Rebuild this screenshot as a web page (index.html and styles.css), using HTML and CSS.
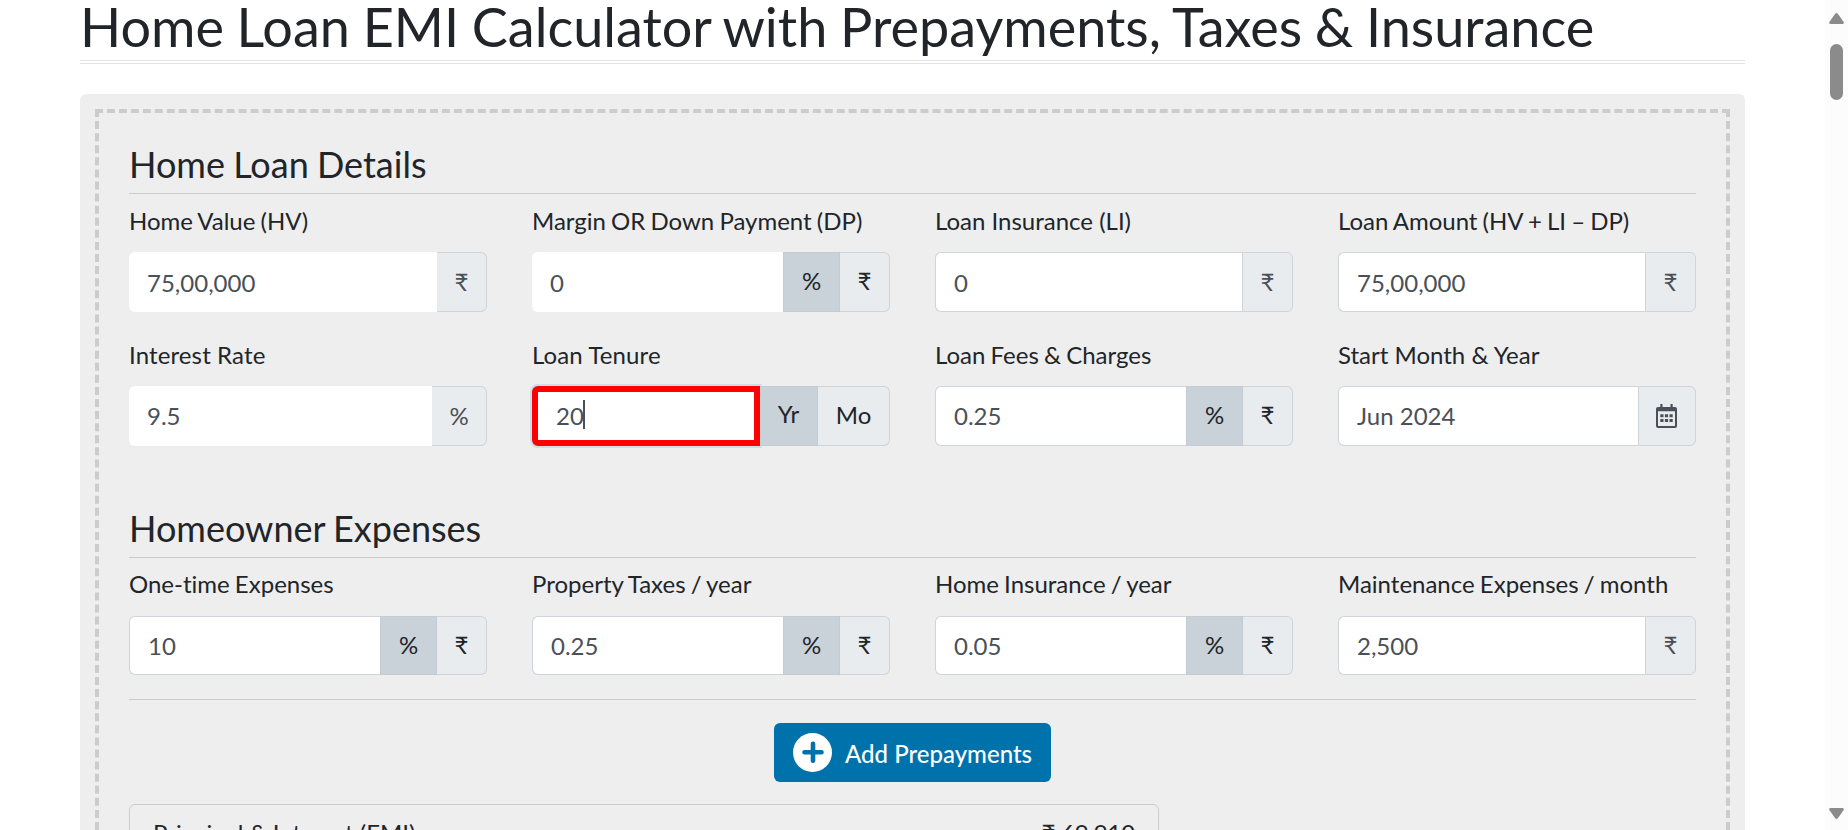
FILE: index.html
```html
<!DOCTYPE html>
<html lang="en">
<head>
<meta charset="utf-8">
<title>Home Loan EMI Calculator</title>
<link rel="stylesheet" href="styles.css">
</head>
<body>
<main class="page">
  <h1 class="title">Home Loan EMI Calculator with Prepayments, Taxes &amp; Insurance</h1>
  <div class="panel">
    <form class="form">
      <h2 class="heading">Home Loan Details</h2>
      <div class="row first">
        <div class="field"><label class="label">Home Value (HV)</label>
          <div class="group plain"><div class="input">75,00,000</div><span class="addon">₹</span></div></div>
        <div class="field"><label class="label">Margin OR Down Payment (DP)</label>
          <div class="group plain"><div class="input">0</div><span class="toggle active">%</span><span class="toggle">₹</span></div></div>
        <div class="field"><label class="label even">Loan Insurance (LI)</label>
          <div class="group"><div class="input">0</div><span class="addon">₹</span></div></div>
        <div class="field"><label class="label">Loan Amount (HV + LI – DP)</label>
          <div class="group"><div class="input">75,00,000</div><span class="addon">₹</span></div></div>
      </div>
      <div class="row">
        <div class="field"><label class="label even wide">Interest Rate</label>
          <div class="group plain"><div class="input">9.5</div><span class="addon percent">%</span></div></div>
        <div class="field"><label class="label even wide">Loan Tenure</label>
          <div class="group"><div class="input focus">20<span class="caret"></span></div><span class="toggle active yr">Yr</span><span class="toggle mo">Mo</span></div></div>
        <div class="field"><label class="label">Loan Fees &amp; Charges</label>
          <div class="group"><div class="input">0.25</div><span class="toggle active">%</span><span class="toggle">₹</span></div></div>
        <div class="field"><label class="label even">Start Month &amp; Year</label>
          <div class="group"><div class="input">Jun 2024</div><span class="addon date">
            <svg class="calendar" viewBox="0 0 21 24"><path fill-rule="evenodd" d="M4.300 0h2.200v3h8V0h2.200v3H19a2 2 0 0 1 2 2v17a2 2 0 0 1-2 2H2a2 2 0 0 1-2-2V5a2 2 0 0 1 2-2h2.300zM2 7.300v14.200q0 .5.5.5h16q.5 0 .5-.5V7.300z"/><path d="M4.300 10.200h3.200v3H4.300zM8.900 10.200h3.200v3H8.900zM13.500 10.200h3.200v3h-3.200zM4.300 15h3.200v3H4.300zM8.900 15h3.200v3H8.900zM13.500 15h3.200v3h-3.200z"/></svg></span></div></div>
      </div>
      <h2 class="heading second">Homeowner Expenses</h2>
      <div class="row short">
        <div class="field"><label class="label">One-time Expenses</label>
          <div class="group"><div class="input">10</div><span class="toggle active">%</span><span class="toggle">₹</span></div></div>
        <div class="field"><label class="label">Property Taxes / year</label>
          <div class="group"><div class="input">0.25</div><span class="toggle active">%</span><span class="toggle">₹</span></div></div>
        <div class="field"><label class="label">Home Insurance / year</label>
          <div class="group"><div class="input">0.05</div><span class="toggle active">%</span><span class="toggle">₹</span></div></div>
        <div class="field"><label class="label">Maintenance Expenses / month</label>
          <div class="group"><div class="input">2,500</div><span class="addon">₹</span></div></div>
      </div>
      <div class="actions">
        <button type="button" class="button"><svg class="plus" viewBox="0 0 39 39"><circle cx="19.500" cy="19.500" r="19.500" fill="#fff"/><path d="M20 10.700v17M11.500 19.200h17" stroke="#0072ab" stroke-width="4.600" stroke-linecap="round"/></svg><span>Add Prepayments</span></button>
      </div>
      <div class="summary"><span>Principal &amp; Interest (EMI)</span><span class="amount">₹ 69,910</span></div>
    </form>
  </div>
</main>
<div class="scrollbar">
  <svg class="arrow" viewBox="0 0 15 11"><path d="M6 1.100q1.500-2 3 0l5.500 7.700q1 2.200-1.200 2.200H1.700Q-.5 11 .5 8.800z"/></svg>
  <div class="thumb"></div>
  <svg class="arrow down" viewBox="0 0 15 11"><path d="M6 9.900q1.500 2 3 0l5.500-7.700Q15.500 0 13.300 0H1.700Q-.5 0 .5 2.200z"/></svg>
</div>
</body>
</html>
```
FILE: styles.css
```css
* { box-sizing: border-box; }
html { overflow: hidden; }
body {
  margin: 0;
  height: 830px;
  overflow: hidden;
  display: flex;
  background: #fff;
  color: #212529;
  font: 24px/36px Lato, "Open Sans", sans-serif;
  font-variant-ligatures: no-common-ligatures;
}
.page { flex: 1; height: 830px; padding: 0 80px; overflow: hidden; }
.title {
  margin: 0 0 30px;
  height: 64px;
  font-size: 54px;
  font-weight: 400;
  line-height: 53px;
  word-spacing: -1.15px;
  white-space: nowrap;
  border-bottom: 4px double #e3e3e3;
}
.panel { padding: 15px 15px 0; height: 736px; overflow: hidden; background: #eee; border-radius: 6px 6px 0 0; }
.form { height: 721px; padding: 29px 30px 0; overflow: hidden; border: 4px dashed #ccc; border-bottom: 0; }
.heading {
  margin: 0 0 9px;
  height: 52px;
  font-size: 36px;
  font-weight: 400;
  line-height: 44px;
  word-spacing: -1px;
  border-bottom: 1px solid #ccc;
}
.heading.second { margin: 60px 0 8px; }
.row { display: grid; grid-template-columns: repeat(4, 358px); justify-content: space-between; margin-bottom: 25px; }
.label { display: block; margin-bottom: 14px; line-height: 35px; word-spacing: -1px; white-space: nowrap; }
.label.even { word-spacing: 0; }
.label.wide { letter-spacing: .12px; }
.group { display: flex; height: 60px; }
.input {
  flex: 1;
  display: flex;
  align-items: center;
  padding: 0 0 1px 18px;
  color: #495057;
  background: #fff;
  border: 1px solid #ced4da;
  border-right: 0;
  border-radius: 6px 0 0 6px;
}
.plain .input { padding-left: 17px; border-color: #fff; }
.first .input { padding-top: 2px; }
.input.focus {
  border: 6px solid #f00;
  box-shadow: 0 0 0 2px #d0dde5;
}
.caret { width: 2px; height: 29px; margin: -2px 0 0 -1px; background: #495057; }
.addon, .toggle {
  width: 51px;
  display: flex;
  align-items: center;
  justify-content: center;
  background: #e9ecef;
  border: 1px solid #ced4da;
}
.addon { color: #495057; padding-bottom: 1px; }
.addon:last-child, .toggle:last-child { border-radius: 0 6px 6px 0; }
.plain .addon { width: 50px; border-left: 0; }
.plain .percent { width: 55px; }
.group .date { width: 58px; padding: 0 1px 0 0; }
.toggle { padding-bottom: 3px; }
.toggle:last-child { width: 50px; border-left: 0; }
.toggle.active { width: 57px; background: #cad2d9; border-color: #c3ccd4; }
.toggle.yr { width: 58px; padding-bottom: 5px; border-left: 0; }
.group .toggle.mo { width: 72px; }
.calendar { width: 21px; height: 24px; fill: #495057; }
.short { margin-bottom: 24px; }
.short .label { margin-bottom: 15px; }
.short .group { height: 59px; }
.short .input { padding-bottom: 0; }
.short .toggle, .short .addon { padding-bottom: 2px; }
.actions { display: flex; justify-content: center; padding-top: 23px; border-top: 1px solid #ccc; }
.button {
  display: flex;
  align-items: center;
  gap: 13px;
  width: 277px;
  height: 59px;
  padding: 0 0 0 19px;
  border: 0;
  border-radius: 6px;
  background: #0072ab;
  color: #fff;
  font: 500 24px/36px Lato, sans-serif;
  white-space: nowrap;
}
.button span { padding-top: 2px; }
.plus { width: 39px; height: 39px; flex: none; }
.summary {
  display: flex;
  justify-content: space-between;
  width: 1030px;
  height: 80px;
  margin-top: 22px;
  padding: 10px 23px;
  border: 1px solid #ccc;
  border-radius: 6px;
}
.amount { letter-spacing: -.2px; }
.scrollbar { width: 23px; height: 830px; padding: 13px 0 11px; display: flex; flex-direction: column; align-items: center; background: #fcfcfc; }
.arrow { flex: none; width: 15px; height: 11px; fill: #8b8b8b; }
.down { margin-top: auto; }
.thumb { flex: none; width: 13px; height: 56px; margin-top: 20px; border-radius: 7px; background: #8b8b8b; }
```
